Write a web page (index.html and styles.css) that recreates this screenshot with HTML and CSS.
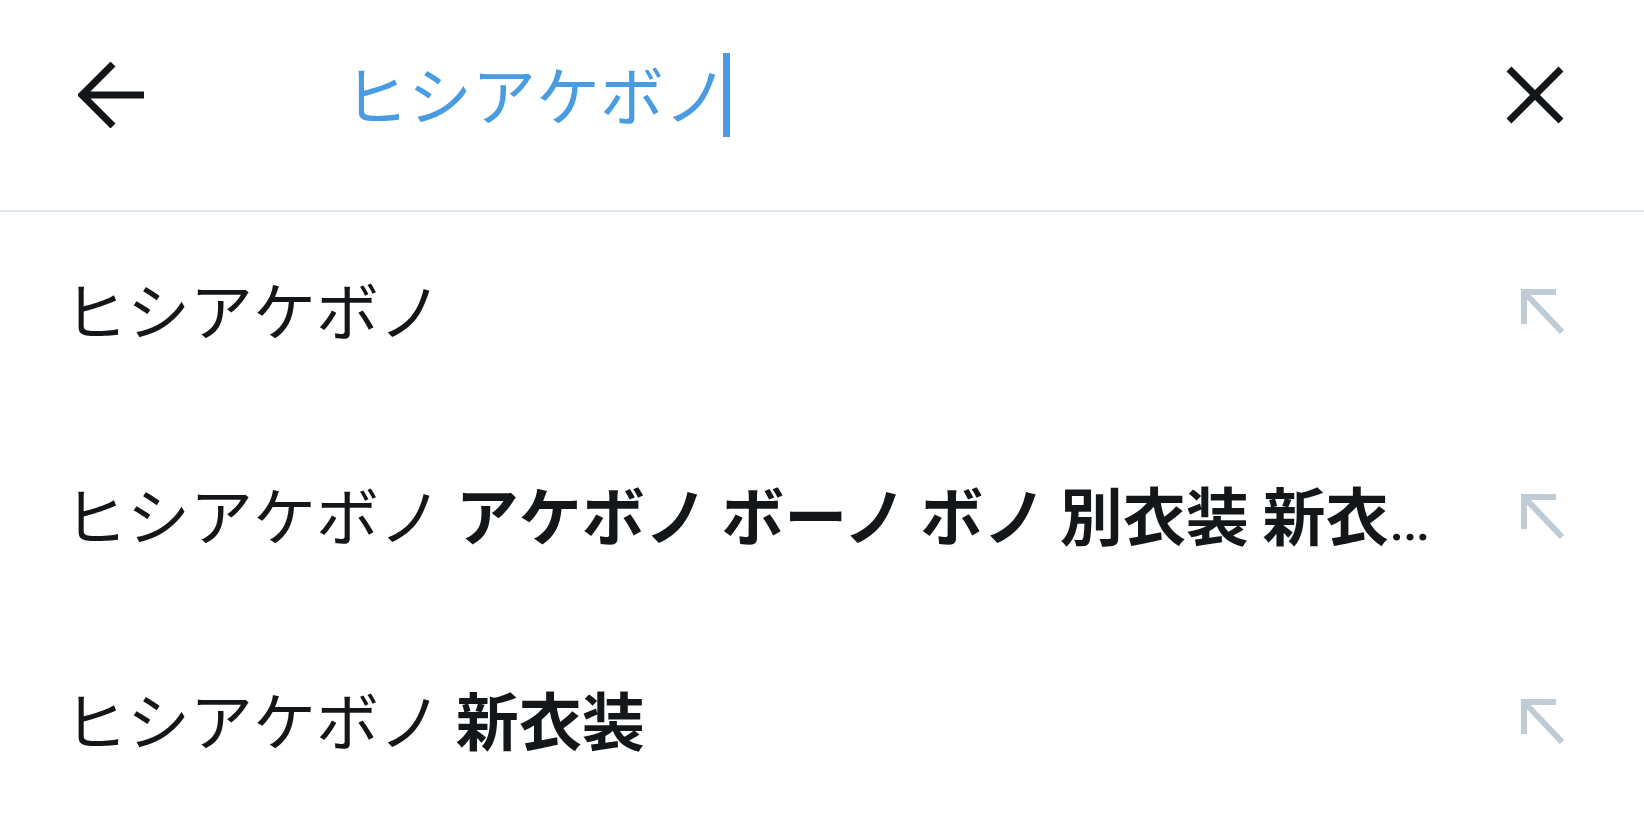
FILE: index.html
```html
<!DOCTYPE html>
<html lang="ja">

<head>
    <meta charset="UTF-8">
    <meta name="viewport" content="width=device-width, initial-scale=1.0">
    <title>検索</title>

    <link rel="stylesheet" href="styles.css">
</head>

<body>
    <!-- Search header -->
    <header class="search-bar">
        <button class="icon-btn back-btn" aria-label="戻る">
            <svg width="66" height="66" viewBox="0 0 66 66">
                <path d="M66 33 H6 M35 2 L4 33 L35 64" fill="none" stroke="#14171a" stroke-width="7" stroke-linejoin="miter"/>
            </svg>
        </button>
        <div class="search-field">
            <span class="query">ヒシアケボノ</span><span class="caret"></span>
        </div>
        <button class="icon-btn close-btn" aria-label="クリア">
            <svg width="58" height="58" viewBox="0 0 58 58">
                <path d="M3 3 L55 55 M55 3 L3 55" fill="none" stroke="#14171a" stroke-width="7"/>
            </svg>
        </button>
    </header>

    <!-- Suggestions -->
    <ul class="suggestions">
        <li class="suggestion">
            <span class="suggestion-text">ヒシアケボノ</span>
            <svg class="fill-icon" width="46" height="48" viewBox="0 0 46 48">
                <path d="M36 4 H4 V36 M4 4 L42 44" fill="none" stroke="#bfcbd5" stroke-width="6"/>
            </svg>
        </li>
        <li class="suggestion">
            <span class="suggestion-text">ヒシアケボノ <b>アケボノ ボーノ ボノ 別衣装 新衣装</b></span>
            <svg class="fill-icon" width="46" height="48" viewBox="0 0 46 48">
                <path d="M36 4 H4 V36 M4 4 L42 44" fill="none" stroke="#bfcbd5" stroke-width="6"/>
            </svg>
        </li>
        <li class="suggestion">
            <span class="suggestion-text">ヒシアケボノ <b>新衣装</b></span>
            <svg class="fill-icon" width="46" height="48" viewBox="0 0 46 48">
                <path d="M36 4 H4 V36 M4 4 L42 44" fill="none" stroke="#bfcbd5" stroke-width="6"/>
            </svg>
        </li>
    </ul>
</body>

</html>
```

FILE: styles.css
```css
body {
    font-family: Roboto, "Noto Sans CJK JP", sans-serif;
    margin: 0;
    padding: 0;
    background-color: #fff;
    color: #14171a;
}

.search-bar {
    display: flex;
    align-items: center;
    height: 190px;
    padding: 0 80px 20px 78px;
    border-bottom: 2px solid #e1e8ed;
}

.icon-btn {
    background: none;
    border: none;
    padding: 0;
    display: flex;
    cursor: pointer;
}

.search-field {
    flex: 1;
    display: flex;
    align-items: center;
    margin-left: 200px;
}

.query {
    font-size: 64px;
    color: #4a9ce2;
    line-height: 1;
    padding-top: 8px;
}

.caret {
    width: 7px;
    height: 84px;
    margin-left: -5px;
    background-color: #4a9ce2;
}

.suggestions {
    list-style: none;
    margin: 0;
    padding: 0;
}

.suggestion {
    display: flex;
    align-items: center;
    height: 205px;
    padding: 0 78px 0 64px;
}

.suggestion-text {
    flex: 1;
    min-width: 0;
    margin-right: 72px;
    font-size: 63px;
    line-height: 1.4;
    word-spacing: -2px;
    white-space: nowrap;
    overflow: hidden;
    text-overflow: ellipsis;
}

.suggestion-text b {
    font-weight: 700;
}

.fill-icon {
    flex-shrink: 0;
    margin-bottom: 6px;
}
```
